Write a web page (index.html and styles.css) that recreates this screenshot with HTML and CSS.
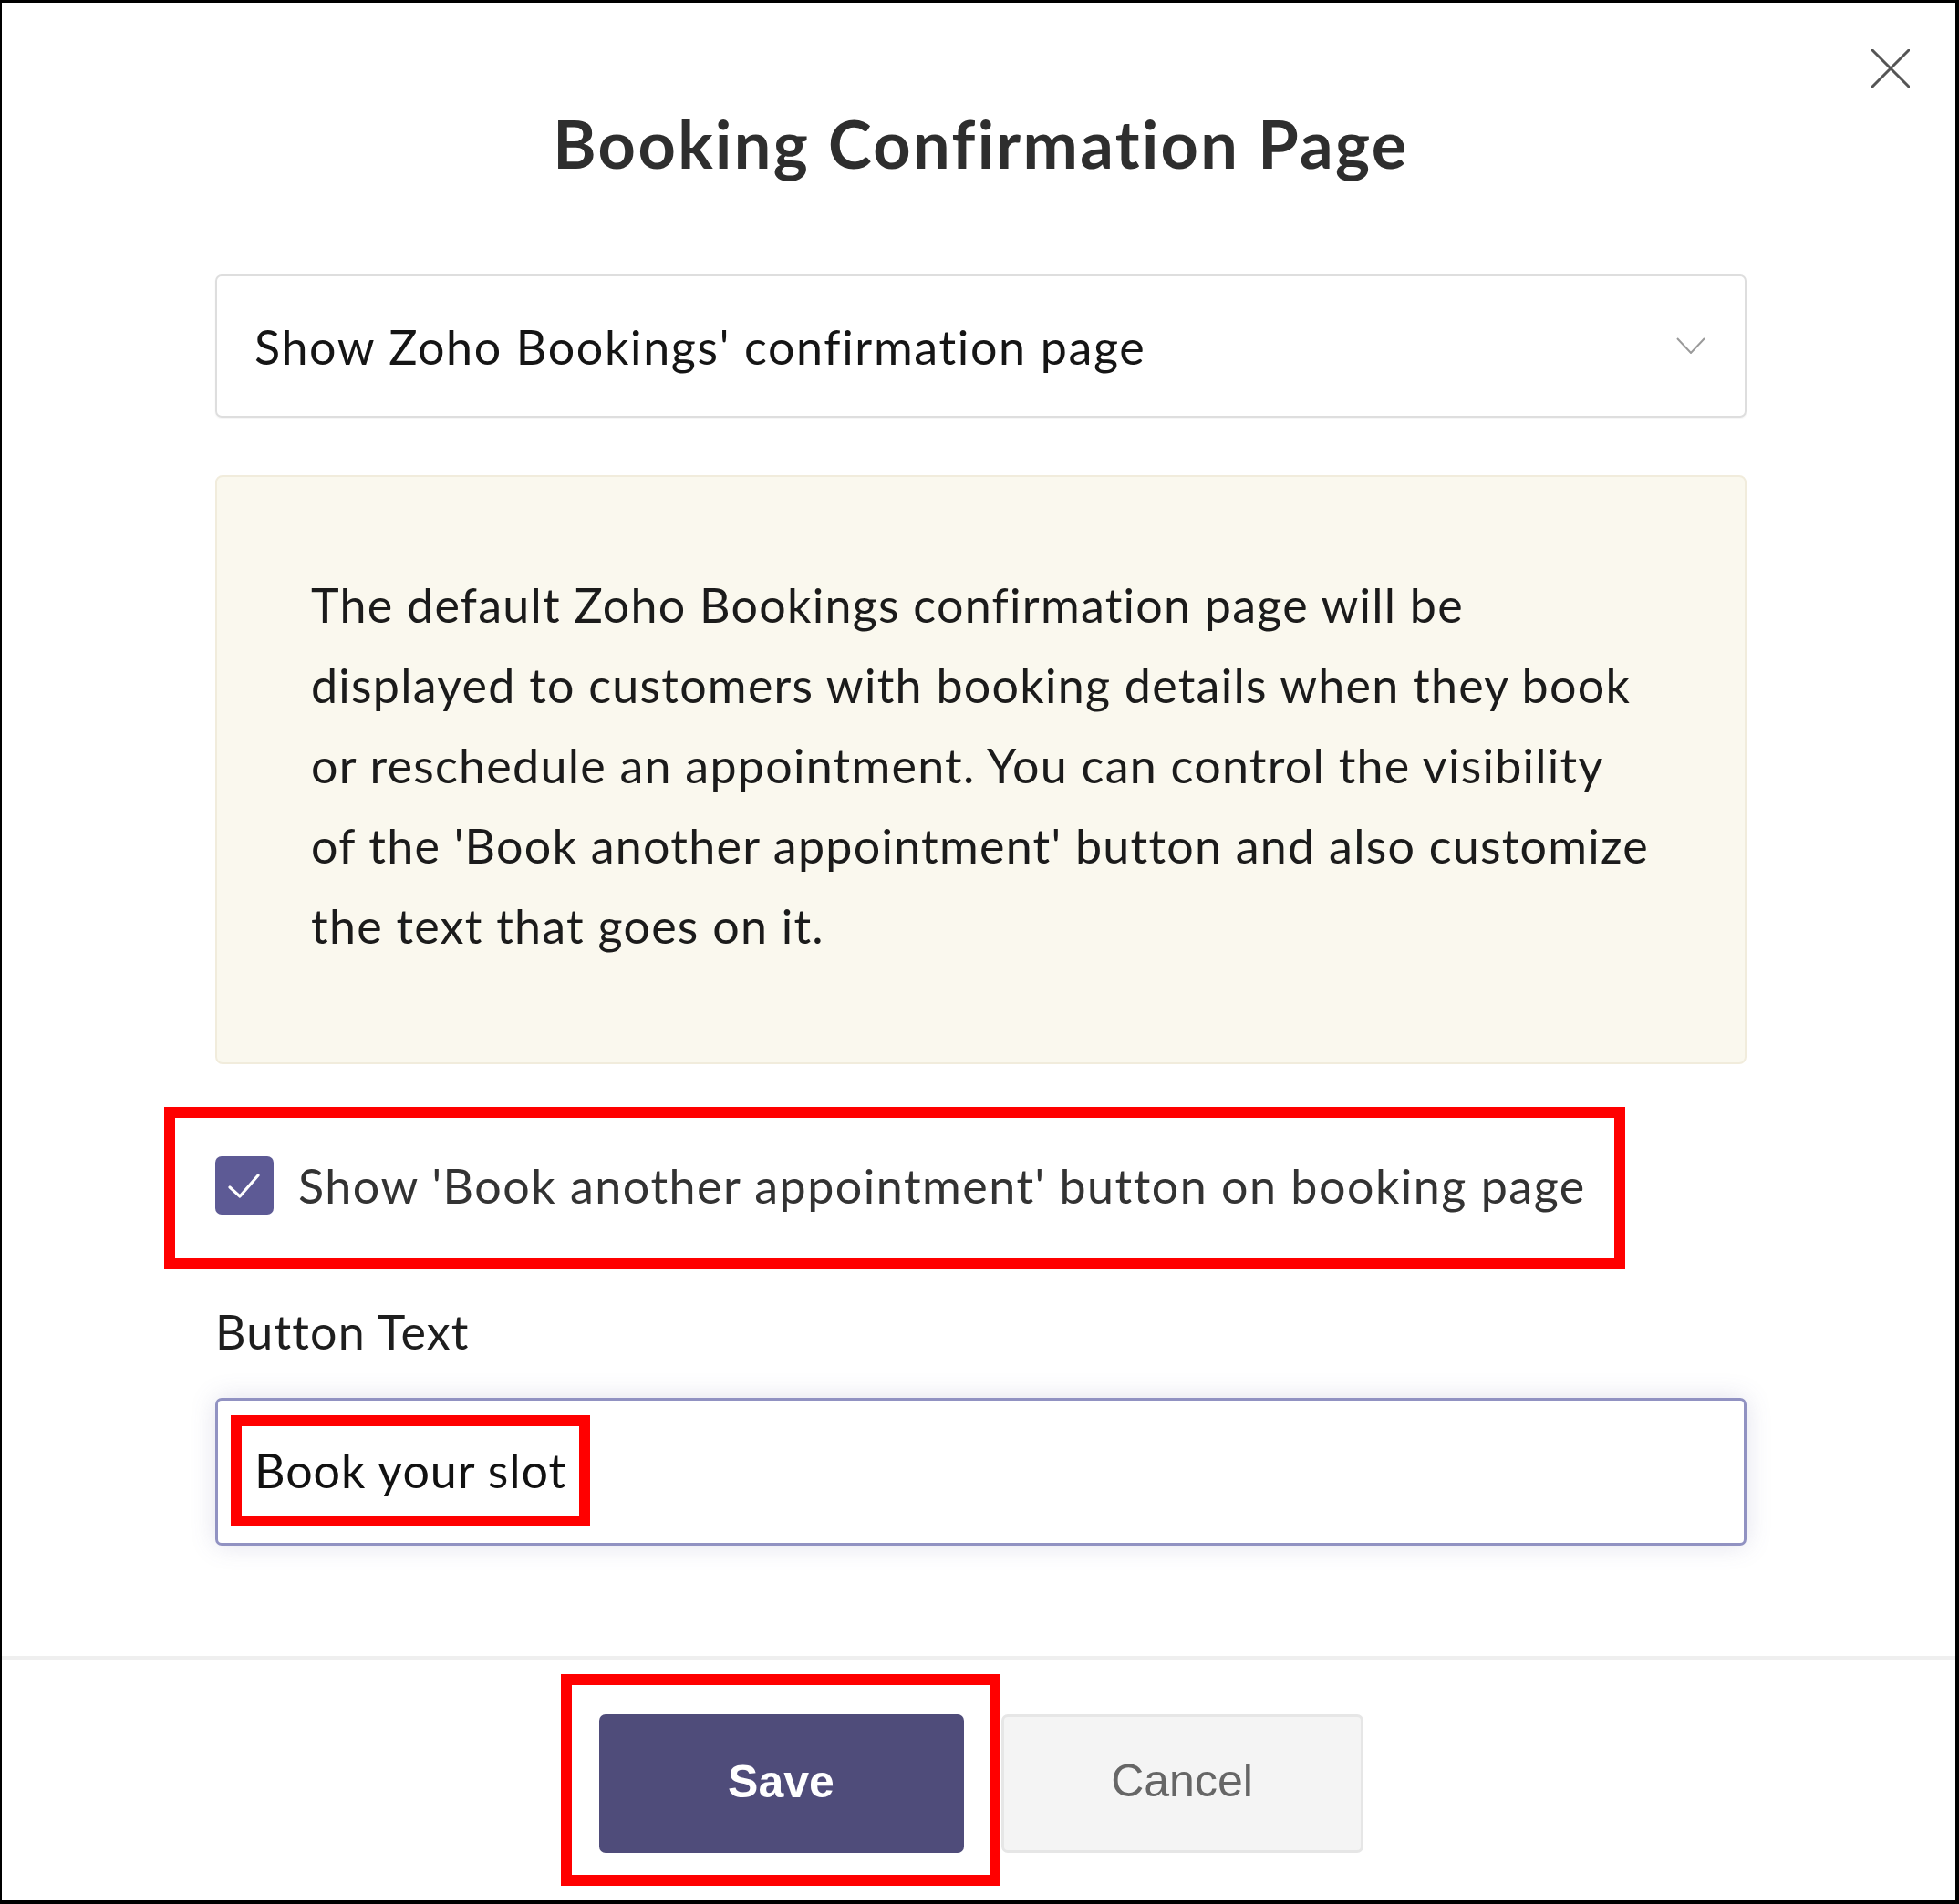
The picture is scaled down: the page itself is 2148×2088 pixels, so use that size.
FILE: index.html
```html
<!DOCTYPE html>
<html lang="en">
<head>
<meta charset="utf-8">
<title>Booking Confirmation Page</title>
<link rel="stylesheet" href="styles.css">
</head>
<body>
<div class="frame">
  <button class="close" aria-label="Close">
    <svg width="42" height="42" viewBox="0 0 42 42"><path d="M1 1 L41 41 M41 1 L1 41" stroke="#555" stroke-width="3" fill="none" stroke-linecap="round"/></svg>
  </button>
  <div class="content">
    <h1 class="title">Booking Confirmation Page</h1>
    <div class="select">
      <span class="select-text">Show Zoho Bookings' confirmation page</span>
      <svg class="chevron" width="32" height="18" viewBox="0 0 32 18"><path d="M1 1 L16 17 L31 1" stroke="#9a9a9a" stroke-width="2" fill="none"/></svg>
    </div>
    <div class="info">
      <p class="info-text">The default Zoho Bookings confirmation page will be<br>displayed to customers with booking details when they book<br>or reschedule an appointment. You can control the visibility<br>of the 'Book another appointment' button and also customize<br>the text that goes on it.</p>
    </div>
    <div class="check-row">
      <span class="checkbox">
        <svg width="64" height="64" viewBox="0 0 64 64"><path d="M16 34 L27 44 L47 21" stroke="#fff" stroke-width="3.2" fill="none" stroke-linecap="round" stroke-linejoin="round"/></svg>
      </span>
      <span class="check-label">Show 'Book another appointment' button on booking page</span>
      <span class="mark mark-check"></span>
    </div>
    <div class="field-label">Button Text</div>
    <div class="input">
      <span class="input-text">Book your slot</span>
      <span class="mark mark-input"></span>
    </div>
  </div>
  <div class="footer">
    <div class="save-wrap">
      <button class="btn btn-save">Save</button>
      <span class="mark mark-save"></span>
    </div>
    <button class="btn btn-cancel">Cancel</button>
  </div>
</div>
</body>
</html>
```

FILE: styles.css
```css
* { box-sizing: border-box; }
html, body { margin: 0; padding: 0; background: #fff; }
body { width: 2148px; height: 2088px; font-family: "Lato", "Noto Sans", sans-serif; }

.frame {
  position: relative;
  width: 2148px;
  height: 2088px;
  border-style: solid;
  border-color: #000;
  border-width: 3px 4px 4px 2px;
  display: flex;
  flex-direction: column;
  background: #fff;
}

.close {
  position: absolute;
  left: 2050px;
  top: 51px;
  width: 42px;
  height: 42px;
  padding: 0;
  border: 0;
  background: transparent;
  display: block;
}
.close svg { display: block; }

.content {
  width: 1679px;
  margin-left: 234px;
  display: flex;
  flex-direction: column;
}

.title {
  margin: 111px 0 0 0;
  font-size: 72px;
  line-height: 86px;
  font-weight: 700;
  color: #2e2e2e;
  text-align: center;
  letter-spacing: 2.4px;
}

.select {
  margin-top: 101px;
  height: 157px;
  border: 2px solid #dedede;
  border-radius: 7px;
  box-shadow: 0 1px 2px rgba(0,0,0,0.05);
  display: flex;
  align-items: center;
  justify-content: space-between;
  padding: 0 43px 0 41px;
}
.select-text {
  font-size: 52px;
  line-height: 62px;
  color: #151515;
  letter-spacing: 1.65px;
}
.chevron { display: block; margin-top: -2px; }

.info {
  margin-top: 63px;
  background: #faf8ee;
  border: 2px solid #f1ecdc;
  border-radius: 8px;
  padding: 96px 40px 106px 103px;
}
.info-text {
  margin: 0;
  font-size: 52px;
  line-height: 88px;
  color: #1b1b1b;
  white-space: nowrap;
  letter-spacing: 1.25px;
}

.check-row {
  position: relative;
  margin-top: 101px;
  height: 64px;
  display: flex;
  align-items: center;
}
.checkbox {
  width: 64px;
  height: 64px;
  border-radius: 7px;
  background: #5d5a95;
  flex: none;
  display: block;
}
.checkbox svg { display: block; }
.check-label {
  margin-left: 27px;
  font-size: 52px;
  line-height: 62px;
  color: #333;
  white-space: nowrap;
  letter-spacing: 1.5px;
}

.field-label {
  margin-top: 97px;
  font-size: 52px;
  line-height: 62px;
  color: #1e1e1e;
  letter-spacing: 1.2px;
}

.input {
  position: relative;
  margin-top: 42px;
  height: 162px;
  border: 3px solid #9192c2;
  border-radius: 7px;
  box-shadow: 0 0 28px rgba(90, 90, 150, 0.18);
  display: flex;
  align-items: center;
  padding: 0 40px 5px 40px;
}
.input-text {
  font-size: 52px;
  line-height: 62px;
  color: #111;
  letter-spacing: 0.95px;
}

.footer {
  margin-top: auto;
  border-top: 4px solid #efefef;
  padding: 60px 0 52px 0;
  display: flex;
  justify-content: center;
  gap: 41px;
  padding-left: 5px;
}

.save-wrap { position: relative; }

.btn {
  display: block;
  width: 400px;
  height: 152px;
  border-radius: 7px;
  font-family: "Liberation Sans", Arial, sans-serif;
  font-size: 50px;
  padding: 0 0 5px 0;
  margin: 0;
}
.btn-save {
  background: #4f4c7a;
  border: 0;
  color: #fff;
  font-weight: 700;
  padding-bottom: 4px;
}
.btn-cancel {
  width: 397px;
  background: #f4f4f4;
  border: 3px solid #e6e6e6;
  color: #666;
  font-weight: 400;
  padding-bottom: 7px;
}

.mark {
  position: absolute;
  border: 12px solid #ff0000;
  pointer-events: none;
}
.mark-check { left: -56px; top: -54px; width: 1602px; height: 178px; }
.mark-input { left: 14px; top: 16px; width: 394px; height: 122px; }
.mark-save { left: -42px; top: -44px; width: 482px; height: 232px; }
```
